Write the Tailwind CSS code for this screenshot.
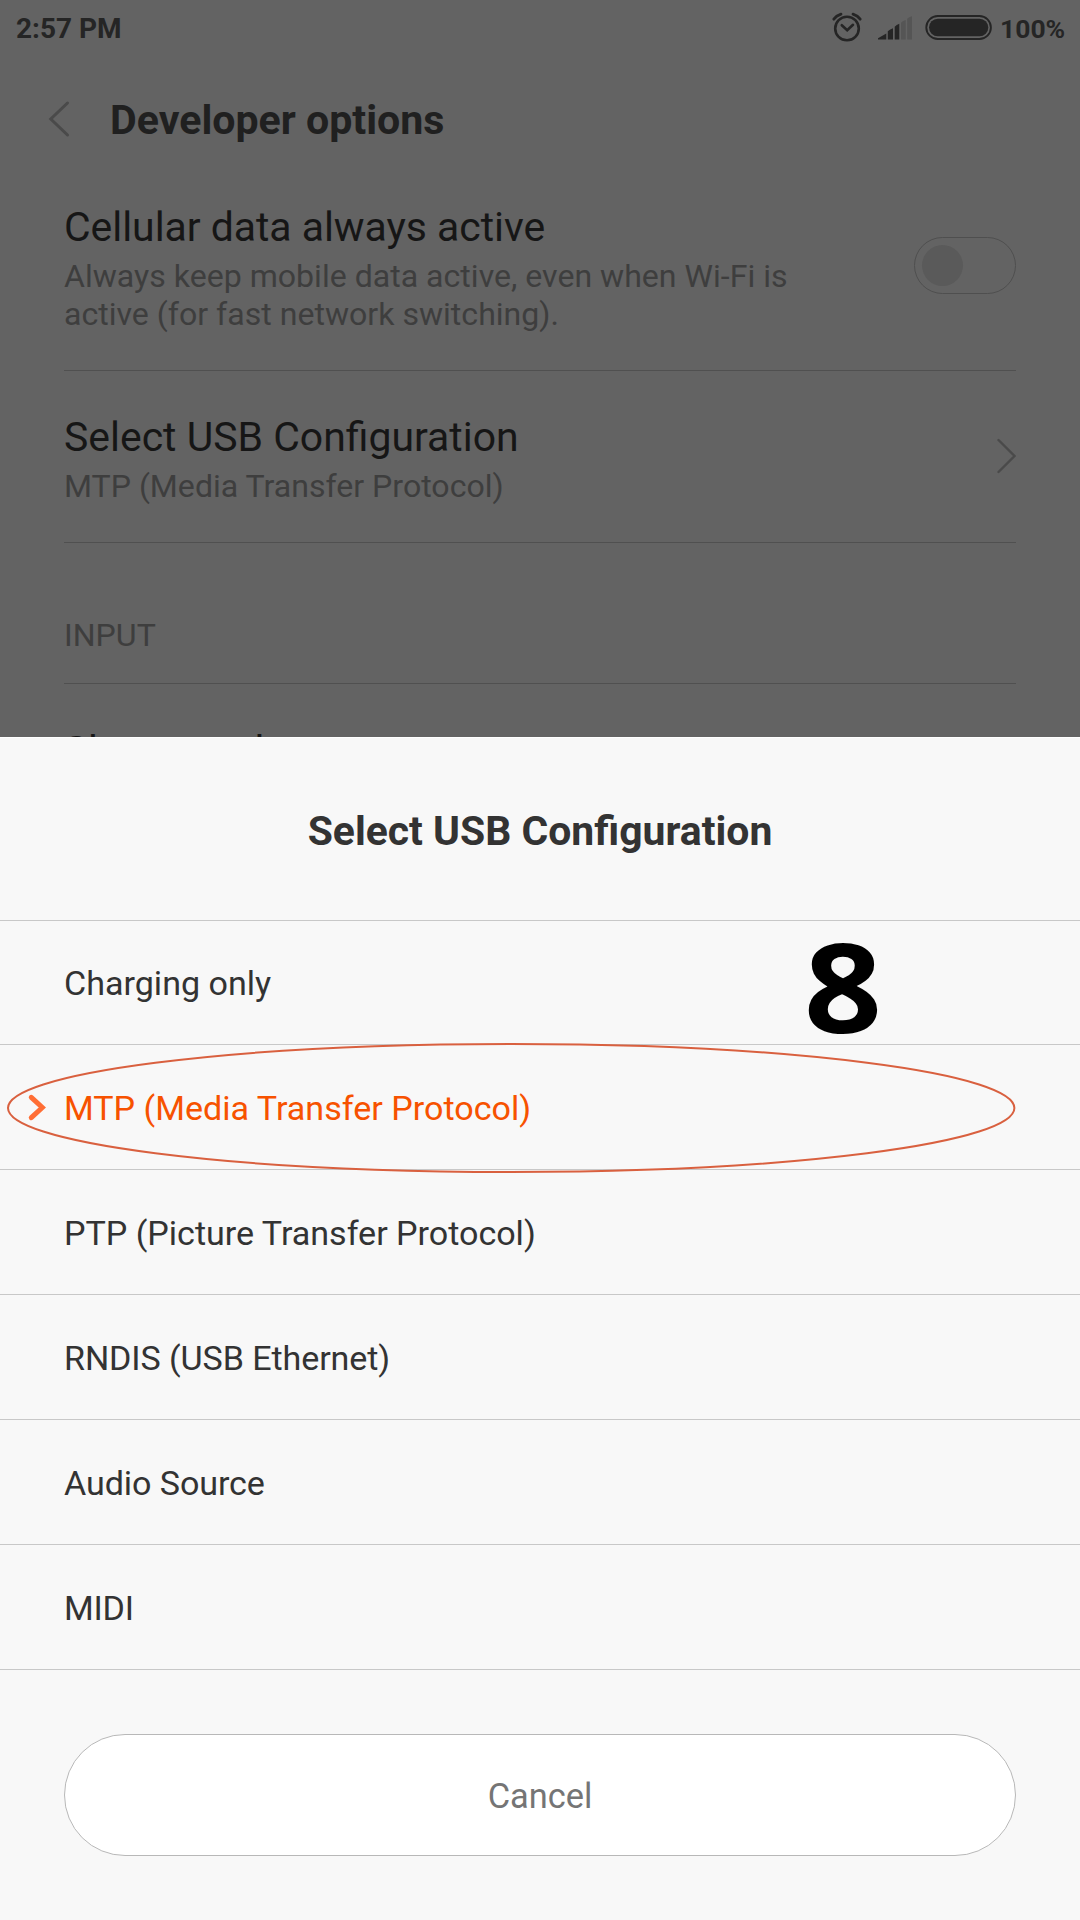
<!DOCTYPE html>
<html lang="en">
<head>
<meta charset="utf-8">
<title>Developer options</title>
<script src="https://cdn.jsdelivr.net/npm/@tailwindcss/browser@4"></script>
</head>
<body class="relative h-[1920px] w-[1080px] overflow-hidden bg-[#636363] font-['Roboto',sans-serif]">

<!-- Status bar -->
<header class="flex h-[57px] items-center pl-4 pr-4 text-[#252525]">
  <span class="text-[28px] leading-[57px] font-bold">2:57 PM</span>
  <div class="ml-auto flex items-center">
    <svg class="h-[57px] w-[170px]" viewBox="829 0 170 57" fill="none" stroke="#252525">
      <circle cx="847" cy="28.5" r="11.8" stroke-width="2.6"/>
      <path d="M841.8 25.2 847.2 30.2 853 24.8" stroke-width="2.6" stroke-linecap="round"/>
      <path d="M833.8 19.2Q836.5 15.6 841 14.2M853 14.2Q857.500 15.600 860.2 19.200" stroke-width="2.8" stroke-linecap="round"/>
      <g stroke="none" fill="#252525">
        <path d="M878 39.600V38.300L886.300 33.400V39.600ZM887.800 39.600V31.300Q890 29.200 893 28.200V39.600ZM894.700 39.600V26.800Q896.500 24.600 899.300 23.800V39.600Z"/>
        <path fill="#555" d="M901 39.600V22.800Q903 20.800 905.700 20V39.600ZM907.200 39.600V18.800Q909 16.800 912 16.300V39.600Z"/>
      </g>
      <rect x="926.300" y="16" width="64.600" height="23" rx="11.500" stroke-width="1.900"/>
      <rect x="929" y="18.700" width="59.300" height="17.600" rx="8.800" fill="#252525" stroke="none"/>
    </svg>
    <span class="w-[65px] pl-px text-[26.5px] leading-[55px] font-bold">100%</span>
  </div>
</header>

<!-- Title bar -->
<div class="flex h-[126px] items-center">
  <svg class="ml-[45px] h-[40px] w-[65px]" viewBox="45 99.500 65 40" fill="none" stroke="#4a4a4a" stroke-width="3" stroke-linecap="round"><path d="M67.500 102.500 50.800 118.500 67.500 134.500"/></svg>
  <h1 class="text-[41.1px] leading-[48px] font-bold text-[#202020]">Developer options</h1>
</div>

<!-- Settings list -->
<main class="px-16">
  <section class="flex h-[188px] border-b border-[#505050] pt-[20px]">
    <div class="w-[760px]">
      <h2 class="text-[40.95px] leading-[48px] tracking-[-0.04px] text-[#161616]">Cellular data always active</h2>
      <p class="mt-[6px] text-[32.1px] leading-[38px] text-[#3e3e3e]">Always keep mobile data active, even when Wi-Fi is<br>active (for fast network switching).</p>
    </div>
    <div class="mt-[34px] ml-auto flex h-[57px] w-[102px] items-center rounded-full border border-[#4f4f4f] pl-[7px]">
      <div class="size-[41px] rounded-full bg-[#5a5a5a]"></div>
    </div>
  </section>
  <section class="flex h-[172px] border-b border-[#505050] pt-[42px]">
    <div>
      <h2 class="text-[40.95px] leading-[48px] text-[#161616]">Select USB Configuration</h2>
      <p class="mt-[6px] text-[32.1px] leading-[38px] text-[#3e3e3e]">MTP (Media Transfer Protocol)</p>
    </div>
    <svg class="mt-[23px] ml-auto h-[40px] w-[24px]" viewBox="992 436 24 40" fill="none" stroke="#4a4a4a" stroke-width="2.400" stroke-linecap="round"><path d="M998.500 440 1014.500 456 998.500 472"/></svg>
  </section>
  <section class="h-[141px] border-b border-[#505050] pt-[73px]">
    <h3 class="text-[32.1px] leading-[38px] text-[#3e3e3e]">INPUT</h3>
  </section>
  <section class="h-[53px] overflow-hidden pt-[43px]">
    <h2 class="text-[40.8px] leading-[48px] text-[#161616]">Show touches</h2>
  </section>
</main>

<!-- Bottom sheet -->
<div class="h-[1183px] border-t border-white bg-[#f8f8f8] text-[#333]">
  <h2 class="h-[183px] border-b border-[#c8c8c8] pt-[69px] text-center text-[40.9px] leading-[48px] font-bold">Select USB Configuration</h2>
  <ul class="text-[34.1px] leading-[40px]">
    <li class="h-[124px] border-b border-[#c8c8c8] pt-[42px] pl-16">Charging only</li>
    <li class="flex h-[125px] border-b border-[#c8c8c8] pt-[43px] text-[#f75200]">
      <svg class="mt-[4px] ml-[26px] h-[32px] w-[38px]" viewBox="26 1092 38 32" fill="none" stroke="#ff6e35" stroke-width="5" stroke-linecap="round"><path d="M31.300 1097.300 42.300 1107.500 31.300 1117.700"/></svg>
      <span>MTP (Media Transfer Protocol)</span>
    </li>
    <li class="h-[125px] border-b border-[#c8c8c8] pt-[43px] pl-16 tracking-[-0.02px]">PTP (Picture Transfer Protocol)</li>
    <li class="h-[125px] border-b border-[#c8c8c8] pt-[43px] pl-16 tracking-[-0.1px]">RNDIS (USB Ethernet)</li>
    <li class="h-[125px] border-b border-[#c8c8c8] pt-[43px] pl-16 tracking-[-0.08px]">Audio Source</li>
    <li class="h-[125px] border-b border-[#c8c8c8] pt-[43px] pl-16 tracking-[-0.2px]">MIDI</li>
  </ul>
  <button class="mx-16 mt-16 block h-[122px] w-[952px] rounded-full border border-[#b8b8b8] bg-white pt-[2px] text-[34.4px] leading-[40px] text-[#757575]">Cancel</button>
</div>

<!-- Annotations drawn over the screen -->
<svg class="absolute top-[1040px] left-0 h-[136px] w-[1080px]" viewBox="0 1040 1080 136" fill="none" stroke="#d9603f" stroke-width="2"><ellipse cx="511.200" cy="1108" rx="503.200" ry="64"/></svg>
<span class="absolute top-[915px] left-[783px] w-[120px] scale-x-[1.1] text-center font-['Open_Sans',sans-serif] text-[124px] leading-[140px] font-[750] text-black">8</span>
</body>
</html>
